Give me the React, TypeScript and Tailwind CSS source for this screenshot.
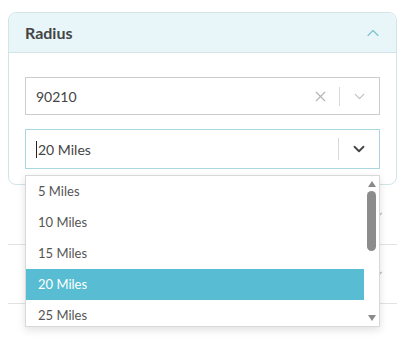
import { X, ChevronDown, ChevronUp } from "lucide-react"

const options = ["5 Miles", "10 Miles", "15 Miles", "20 Miles", "25 Miles"]

export default function App() {
  return (
    <div className="relative h-[351px] w-[407px] bg-white pt-3 pl-2 pr-[10px] text-[#444]" style={{ fontFamily: "Lato, 'Noto Sans', sans-serif" }}>
      <div className="rounded-lg border border-[#d3e4e8] bg-white">
        <div className="flex h-[40px] items-center justify-between rounded-t-lg border-b border-[#d3e4e8] bg-[#e8f6f9] pl-4 pr-[13px]">
          <span className="text-[16px] font-bold text-[#444]">Radius</span>
          <ChevronUp size={20} strokeWidth={1.4} className="text-[#7cc3d0]" />
        </div>
        <div className="px-4 pt-6 pb-[15px]">
          <div className="flex h-[38px] items-center border border-[#cccccc] bg-white">
            <span className="flex-1 pl-[10px] text-[14px] text-[#444]">90210</span>
            <X size={17} strokeWidth={1.6} className="mr-[10px] text-[#b3b3b3]" />
            <div className="h-[19px] w-px bg-[#d9d9d9]" />
            <ChevronDown size={17} strokeWidth={1.5} className="mx-[11px] text-[#bdbdbd]" />
          </div>
          <div className="mt-[14px] flex h-[40px] items-center border border-[#a9d6df] bg-white">
            <span className="flex-1 pl-[10px] text-[14px] text-[#444]">
              <span className="mr-px inline-block h-[17px] w-px translate-y-[3px] bg-[#222]" />
              20 Miles
            </span>
            <div className="h-[22px] w-px bg-[#d9d9d9]" />
            <ChevronDown size={18} strokeWidth={2.4} className="mx-[11px] text-[#444]" />
          </div>
        </div>
      </div>
      <div className="flex h-[60px] items-center justify-end border-b border-[#e2e2e2] pr-3">
        <ChevronDown size={14} className="text-[#bbb]" />
      </div>
      <div className="flex h-[59px] items-center justify-end border-b border-[#e2e2e2] pr-3">
        <ChevronDown size={14} className="text-[#bbb]" />
      </div>

      <div className="absolute top-[175px] left-[25px] flex h-[152px] w-[355px] overflow-hidden border border-[#d8d8d8] bg-white shadow-[0_3px_8px_rgba(0,0,0,0.12)]">
        <ul className="flex-1">
          {options.map((o) => (
            <li
              key={o}
              className={`flex h-[31px] items-center pl-3 text-[13px] ${
                o === "20 Miles" ? "bg-[#58bdd3] text-white" : "text-[#555]"
              }`}
            >
              {o}
            </li>
          ))}
        </ul>
        <div className="flex w-[15px] flex-col items-center bg-white">
          <div className="mt-[5px] h-0 w-0 border-x-[4.5px] border-b-[6px] border-x-transparent border-b-[#8a8a8a]" />
          <div className="mt-[4px] h-[60px] w-[9px] rounded-full bg-[#8c8c8c]" />
          <div className="flex-1" />
          <div className="mb-[5px] h-0 w-0 border-x-[4.5px] border-t-[6px] border-x-transparent border-t-[#8a8a8a]" />
        </div>
      </div>
    </div>
  )
}
